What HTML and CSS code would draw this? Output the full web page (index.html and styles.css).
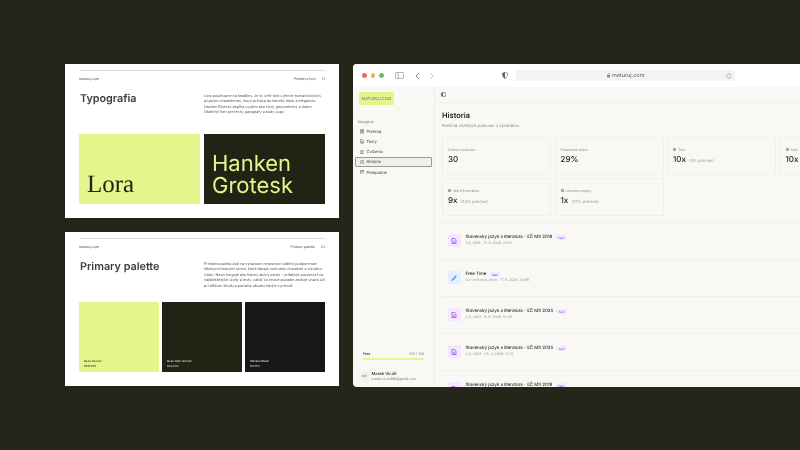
FILE: index.html
```html
<!DOCTYPE html>
<html lang="sk">
<head>
  <meta charset="UTF-8">
  <title>Maturuj brand</title>
  <link rel="stylesheet" href="styles.css">
</head>
<body>
  <div class="slides">
    <section class="slide">
      <div class="slide-head"><span>maturuj.com</span><span class="slide-no"><span>Primárny font</span><span>1.1</span></span></div>
      <div class="slide-intro">
        <h2>Typografia</h2>
        <p>Lora používame na headliny. Je to serif font s jemne humanistickým,<br>písaným charakterom, ktorý prináša do identity teplo a eleganciu.<br>Hanken Grotesk dopĺňa systém ako čistý, geometrický a dobre<br>čitateľný font pre texty, paragrafy a body copy.</p>
      </div>
      <div class="type-blocks">
        <div class="type-lora">Lora</div>
        <div class="type-hanken">Hanken<br>Grotesk</div>
      </div>
    </section>
    <section class="slide">
      <div class="slide-head"><span>maturuj.com</span><span class="slide-no"><span>Primary palette</span><span>2.1</span></span></div>
      <div class="slide-intro">
        <h2>Primary palette</h2>
        <p>Primárna paleta stojí na výraznom neónovom odtieni podporenom<br>hlbokými tmavými tónmi, ktoré dávajú rozhraniu charakter a vizuálnu<br>istotu. Neon funguje ako hlavný akčný prvok – priťahuje pozornosť na<br>najdôležitejšie úlohy a testy, zatiaľ čo tmavé pozadie znižuje únavu očí<br>pri dlhšom štúdiu a pomáha obsahu lepšie vyniknúť.</p>
      </div>
      <div class="swatches">
        <div class="swatch neon"><b>Neon Accent</b><span>#E5F58B</span></div>
        <div class="swatch dark"><b>Neon Dark Accent</b><span>#222314</span></div>
        <div class="swatch black"><b>Volcano Black</b><span>#171717</span></div>
      </div>
    </section>
  </div>

  <div class="browser">
    <div class="browser-bar">
      <div class="lights"><i class="red"></i><i class="yellow"></i><i class="green"></i></div>
      <svg class="tb-sidebar" viewBox="0 0 9 7"><rect x=".4" y=".4" width="8.2" height="6.2" rx="1" fill="none" stroke="#777" stroke-width=".6"/><path d="M3.2.4v6.2" stroke="#777" stroke-width=".6"/></svg>
      <svg class="tb-back" viewBox="0 0 5 8"><path d="M4 .8 1 4l3 3.2" fill="none" stroke="#666" stroke-width=".8"/></svg>
      <svg class="tb-fwd" viewBox="0 0 5 8"><path d="M1 .8 4 4 1 7.2" fill="none" stroke="#bbb" stroke-width=".8"/></svg>
      <svg class="tb-shield" viewBox="0 0 6 7"><path d="M3 .3 5.6 1.2C5.7 3.8 4.8 5.7 3 6.7 1.2 5.7.3 3.8.4 1.2Z" fill="#fff" stroke="#666" stroke-width=".6"/><path d="M3 .3V6.7C1.2 5.7.3 3.8.4 1.2Z" fill="#666"/></svg>
      <div class="url">
        <svg class="url-lock" viewBox="0 0 4 5"><rect y="2" width="4" height="3" rx=".5" fill="#888"/><path d="M1 2V1.3a1 1 0 0 1 2 0V2" fill="none" stroke="#888" stroke-width=".5"/></svg>
        <span>maturuj.com</span>
        <svg class="url-reload" viewBox="0 0 6 6"><path d="M5 3a2.1 2.1 0 1 1-.7-1.6M4.4.5v1.1H3.3" fill="none" stroke="#888" stroke-width=".5"/></svg>
      </div>
    </div>

    <div class="app">
      <aside class="sidebar">
        <div class="logo">MATURUJ.COM</div>
        <div class="nav-label">Navigácia</div>
        <nav class="nav">
          <a><svg viewBox="0 0 5 5"><path d="M.4.4h1.7v1.7H.4zM2.9.4h1.7v1.7H2.9zM.4 2.9h1.7v1.7H.4zM2.9 2.9h1.7v1.7H2.9z" fill="none" stroke="#444" stroke-width=".5"/></svg>Prehľad</a>
          <a><svg viewBox="0 0 5 5"><path d="M.6.4h2.4l1.4 1.4v2.8H.6zM1.5 2.6h2M1.5 3.6h2" fill="none" stroke="#444" stroke-width=".5"/></svg>Testy</a>
          <a><svg viewBox="0 0 5 5"><path d="M2.5 1.1C1.9.6 1.1.6.3.7v3.4c.8-.1 1.6-.1 2.2.4.6-.5 1.4-.5 2.2-.4V.7c-.8-.1-1.6-.1-2.2.4zV4.5" fill="none" stroke="#444" stroke-width=".5"/></svg>Cvičenia</a>
          <a class="active"><svg viewBox="0 0 5 5"><circle cx="2.5" cy="2.5" r="2.1" fill="none" stroke="#444" stroke-width=".5"/><path d="M2.5 1.3v1.3l.9.5" fill="none" stroke="#444" stroke-width=".5"/></svg>Historia</a>
          <a><svg viewBox="0 0 5 5"><rect x=".4" y=".7" width="4.2" height="3.9" rx=".4" fill="none" stroke="#444" stroke-width=".5"/><path d="M.4 2h4.2M1.5.2v1M3.5.2v1" stroke="#444" stroke-width=".5"/></svg>Predplatné</a>
        </nav>
        <div class="plan">
          <div class="plan-row"><b>Free</b><span>100 / 100</span></div>
          <div class="plan-bar"></div>
        </div>
        <div class="user">
          <div class="avatar">MV</div>
          <div class="user-text"><b>Marek Vicáň</b><span>marek.vican666@gmail.com</span></div>
        </div>
      </aside>

      <main class="main">
        <div class="main-top">
          <svg viewBox="0 0 5 5"><rect x=".3" y=".6" width="4.4" height="3.8" rx=".5" fill="none" stroke="#444" stroke-width=".5"/><path d="M.5 1h1.3v3H.5z" fill="#444"/></svg>
        </div>
        <div class="content">
          <h1>Historia</h1>
          <p class="sub">Prehľad všetkých pokusov a výsledkov</p>
          <div class="stats">
            <div class="stat"><div class="stat-label">Celkom pokusov</div><div class="stat-val">30</div></div>
            <div class="stat"><div class="stat-label">Priemerné skóre</div><div class="stat-val">29%</div></div>
            <div class="stat"><div class="stat-label"><i class="dot"></i>Test</div><div class="stat-val">10x <small>(3% priemer)</small></div></div>
            <div class="stat"><div class="stat-label"><i class="dot"></i>Sloh</div><div class="stat-val">10x <small>(8% priemer)</small></div></div>
            <div class="stat"><div class="stat-label"><i class="dot"></i>Word Formation</div><div class="stat-val">9x <small>(24% priemer)</small></div></div>
            <div class="stat"><div class="stat-label"><i class="dot"></i>Literárne pojmy</div><div class="stat-val">1x <small>(27% priemer)</small></div></div>
          </div>
          <div class="attempts">
            <div class="attempt">
              <div class="a-icon purple"><svg viewBox="0 0 6 6"><path d="M1 .5h2.7L5 1.8v3.7H1z" fill="none" stroke="#9333ea" stroke-width=".7"/><path d="M2 3.2h2M2 4.3h2" stroke="#9333ea" stroke-width=".5"/></svg></div>
              <div><div class="a-title">Slovenský jazyk a literatúra - EČ MS 2019 <em class="tag">Test</em></div><div class="a-meta">3,6, 2019 &nbsp; 17. 5. 2026, 22:07</div></div>
            </div>
            <div class="attempt">
              <div class="a-icon blue"><svg viewBox="0 0 6 6"><path d="M1 5 4.3 1.1c.4-.4 1-.1.7.5L1.8 5.3 1 5.5z" fill="none" stroke="#2563eb" stroke-width=".7"/></svg></div>
              <div><div class="a-title">Free Time <em class="tag tag-blue">Sloh</em></div><div class="a-meta">B2 - informal_letter &nbsp; 17. 5. 2026, 20:56</div></div>
            </div>
            <div class="attempt">
              <div class="a-icon purple"><svg viewBox="0 0 6 6"><path d="M1 .5h2.7L5 1.8v3.7H1z" fill="none" stroke="#9333ea" stroke-width=".7"/><path d="M2 3.2h2M2 4.3h2" stroke="#9333ea" stroke-width=".5"/></svg></div>
              <div><div class="a-title">Slovenský jazyk a literatúra - EČ MS 2025 <em class="tag">Test</em></div><div class="a-meta">3,4, 2025 &nbsp; 6. 5. 2026, 14:46</div></div>
            </div>
            <div class="attempt">
              <div class="a-icon purple"><svg viewBox="0 0 6 6"><path d="M1 .5h2.7L5 1.8v3.7H1z" fill="none" stroke="#9333ea" stroke-width=".7"/><path d="M2 3.2h2M2 4.3h2" stroke="#9333ea" stroke-width=".5"/></svg></div>
              <div><div class="a-title">Slovenský jazyk a literatúra - EČ MS 2025 <em class="tag">Test</em></div><div class="a-meta">3,4, 2025 &nbsp; 26. 4. 2026, 12:14</div></div>
            </div>
            <div class="attempt">
              <div class="a-icon purple"><svg viewBox="0 0 6 6"><path d="M1 .5h2.7L5 1.8v3.7H1z" fill="none" stroke="#9333ea" stroke-width=".7"/><path d="M2 3.2h2M2 4.3h2" stroke="#9333ea" stroke-width=".5"/></svg></div>
              <div><div class="a-title">Slovenský jazyk a literatúra - EČ MS 2019 <em class="tag">Test</em></div><div class="a-meta">3,6, 2019 &nbsp; 26. 4. 2026, 11:30</div></div>
            </div>
          </div>
        </div>
      </main>
    </div>
  </div>
</body>
</html>
```

FILE: styles.css
```css
* {
  box-sizing: border-box;
}
html, body {
  height: 100%;
}
body {
  margin: 0;
  background: #232618;
  font-family: Inter, "Liberation Sans", sans-serif;
  text-rendering: geometricPrecision;
  color: #222;
  display: flex;
  align-items: flex-start;
  padding: 64px 0 0 65px;
  overflow: hidden;
}

/* the whole shot is a soft downscale */
.slides, .browser {
  filter: blur(.3px);
}

/* left slides */
.slides {
  width: 274px;
  display: flex;
  flex-direction: column;
  gap: 14px;
  flex: none;
}
.slide {
  height: 154px;
  background: #fff;
  padding: 6px 14px 0;
}
.slide-head {
  border-top: 1px solid #dcdcdc;
  padding-top: 6px;
  display: flex;
  justify-content: space-between;
  font-size: 3.4px;
  line-height: 5px;
  color: #444;
}
.slide-no {
  display: flex;
  gap: 6px;
}
.slide-intro {
  display: grid;
  grid-template-columns: 125px 1fr;
  height: 52px;
  padding-top: 10px;
}
.slide-intro h2 {
  margin: 0 0 0 1px;
  font-size: 10.8px;
  line-height: 14px;
  font-weight: 600;
  color: #3d3d3d;
}
.slide-intro p {
  margin: 0;
  padding-top: 1px;
  font-size: 3.65px;
  line-height: 5.4px;
  color: #555;
  white-space: nowrap;
}
.type-blocks {
  display: grid;
  grid-template-columns: 121px 121px;
  gap: 4px;
  height: 70px;
}
.type-lora {
  background: #e5f58b;
  color: #222314;
  font-family: "Liberation Serif", serif;
  font-size: 25px;
  padding: 38px 0 0 8px;
  line-height: 26px;
}
.type-hanken {
  background: #222314;
  color: #e5f58b;
  font-size: 22px;
  line-height: 21.5px;
  padding: 20px 0 0 8px;
}
.swatches {
  display: grid;
  grid-template-columns: repeat(3, 80px);
  gap: 3px;
  height: 70px;
}
.swatch {
  display: flex;
  flex-direction: column;
  justify-content: flex-end;
  padding: 0 0 4px 5px;
  font-size: 2.8px;
  line-height: 4.5px;
}
.swatch b {
  font-weight: 500;
}
.neon { background: #e5f58b; color: #222314; }
.dark { background: #222314; color: #e8e8e0; }
.black { background: #171717; color: #e8e8e8; }

/* browser window */
.browser {
  flex: none;
  width: 447px;
  height: 323px;
  margin-left: 14px;
  background: #f9f8f4;
  border-radius: 4px 0 0 4px;
  overflow: hidden;
  display: flex;
  flex-direction: column;
}
.browser-bar {
  height: 23px;
  flex: none;
  background: #fff;
  display: flex;
  align-items: center;
  padding-left: 9px;
}
.lights {
  display: flex;
  gap: 3.8px;
}
.lights i {
  width: 4.8px;
  height: 4.8px;
  border-radius: 50%;
}
.red { background: #ec6a5e; }
.yellow { background: #f0b44e; }
.green { background: #61c554; }
.tb-sidebar {
  width: 9px;
  height: 7px;
  margin-left: 11px;
}
.tb-back {
  width: 5px;
  height: 8px;
  margin-left: 11px;
}
.tb-fwd {
  width: 5px;
  height: 8px;
  margin-left: 9px;
}
.tb-shield {
  width: 6px;
  height: 7px;
  margin-left: 68px;
}
.url {
  width: 219px;
  height: 11px;
  margin-left: 8px;
  background: #f3f3f3;
  border-radius: 3px;
  display: flex;
  align-items: center;
  justify-content: center;
  gap: 2px;
  font-size: 5.5px;
  color: #666;
  position: relative;
}
.url-lock {
  width: 3.5px;
  height: 4.5px;
}
.url-reload {
  width: 6px;
  height: 6px;
  position: absolute;
  right: 3px;
  top: 2.5px;
}

.app {
  flex: 1;
  min-height: 0;
  display: flex;
}
.sidebar {
  width: 82px;
  flex: none;
  border-right: 1px solid #f0efea;
  padding: 5px 2px 0 2px;
  display: flex;
  flex-direction: column;
}
.logo {
  width: 35px;
  height: 13px;
  flex: none;
  margin-left: 4px;
  background: #e5f58b;
  font-size: 4px;
  display: flex;
  align-items: center;
  justify-content: center;
  color: #777;
}
.nav-label {
  font-size: 3.3px;
  color: #666;
  margin: 15px 0 0 3px;
  line-height: 5px;
}
.nav {
  margin-top: 1.5px;
  display: flex;
  flex-direction: column;
}
.nav a {
  height: 10.15px;
  display: flex;
  align-items: center;
  gap: 2.5px;
  padding-left: 3.5px;
  font-size: 4px;
  color: #444;
  border: .5px solid transparent;
}
.nav a svg {
  width: 4.5px;
  height: 4.5px;
}
.nav a.active {
  background: #f0efea;
  border-color: #999;
  border-radius: 1px;
}
.plan {
  margin-top: auto;
  padding: 0 8px;
}
.plan-row {
  display: flex;
  justify-content: space-between;
  font-size: 3.5px;
  line-height: 5px;
  color: #888;
}
.plan-row b {
  font-weight: 500;
  color: #333;
}
.plan-bar {
  height: 2px;
  margin-top: 1.5px;
  background: #e5f58b;
  border-radius: 1px;
}
.user {
  display: flex;
  align-items: center;
  gap: 1.5px;
  margin-top: 5px;
  padding: 6px 0 5px 4px;
}
.avatar {
  width: 11px;
  height: 11px;
  border-radius: 50%;
  background: #f1f0eb;
  font-size: 3.2px;
  line-height: 11px;
  text-align: center;
  color: #666;
}
.user-text {
  display: flex;
  flex-direction: column;
  font-size: 3.3px;
  line-height: 5px;
  color: #777;
}
.user-text b {
  font-size: 4.2px;
  font-weight: 500;
  color: #222;
}

/* main column */
.main {
  flex: 1;
  min-width: 0;
  overflow: hidden;
}
.main-top {
  height: 16px;
  border-bottom: 1px solid #f0efea;
  display: flex;
  align-items: center;
  padding-left: 6px;
}
.main-top svg {
  width: 5px;
  height: 5px;
}
.content {
  padding: 8px 0 0 7px;
  width: 470px;
}
.content h1 {
  margin: 0;
  font-size: 7.5px;
  line-height: 10px;
  font-weight: 600;
  color: #222;
}
.sub {
  margin: 3px 0 0;
  font-size: 4.2px;
  line-height: 6px;
  color: #888;
}
.stats {
  margin-top: 7px;
  display: grid;
  grid-template-columns: repeat(4, 109px);
  grid-auto-rows: 38px;
  gap: 2.5px 3.5px;
}
.stat {
  border: .5px solid #f0efea;
  border-radius: 1px;
  padding: 10px 0 0 5px;
}
.stat-label {
  font-size: 3.5px;
  line-height: 5px;
  color: #888;
}
.dot {
  display: inline-block;
  width: 3px;
  height: 3px;
  margin-right: 2px;
  background: #aaa;
}
.stat-val {
  font-size: 8px;
  line-height: 12px;
  font-weight: 500;
  color: #222;
}
.stat-val small {
  font-size: 4px;
  font-weight: 400;
  color: #999;
  margin-left: 1px;
}
.attempts {
  margin-top: 6px;
  width: 358px;
}
.attempt {
  height: 37px;
  border-top: .5px solid #f0efea;
  display: flex;
  align-items: center;
  gap: 5px;
  padding-left: 6px;
}
.a-icon {
  width: 12.5px;
  height: 12.5px;
  border-radius: 1.5px;
  display: flex;
  align-items: center;
  justify-content: center;
  flex: none;
}
.a-icon svg {
  width: 6px;
  height: 6px;
}
.purple { background: #f3e8ff; }
.blue { background: #e7eefe; }
.a-title {
  font-size: 4.4px;
  line-height: 6px;
  font-weight: 500;
  color: #333;
}
.a-meta {
  font-size: 3.5px;
  line-height: 5.5px;
  color: #999;
}
.tag {
  font-style: normal;
  font-size: 2.8px;
  background: #f3e8ff;
  color: #9333ea;
  border-radius: 2px;
  padding: .5px 2.5px;
  margin-left: 2px;
}
.tag-blue {
  background: #e7eefe;
  color: #2563eb;
}
```
